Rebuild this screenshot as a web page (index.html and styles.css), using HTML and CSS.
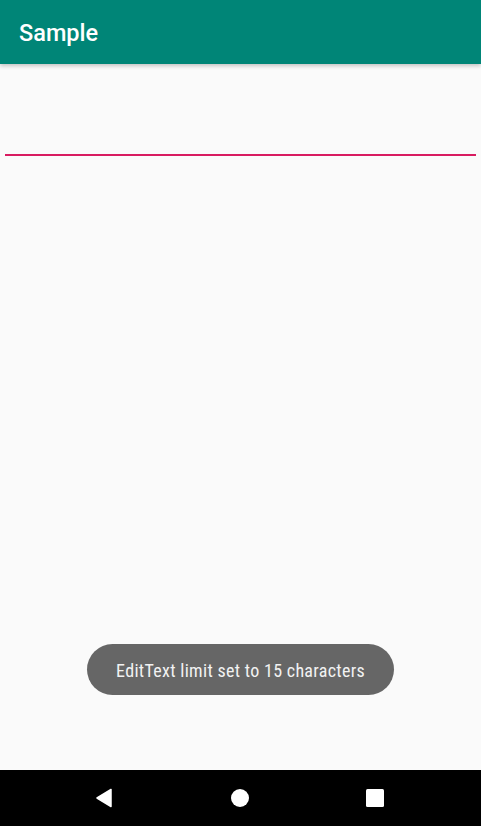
FILE: index.html
```html
<!DOCTYPE html>
<html>
<head>
<meta charset="utf-8">
<link rel="stylesheet" href="styles.css">
</head>
<body>
<div class="screen">
  <header class="toolbar"><span class="title">Sample</span></header>
  <main class="content">
    <div class="edit"><div class="underline"></div></div>
    <div class="spacer"></div>
    <div class="toast-row"><div class="toast">EditText limit set to 15 characters</div></div>
  </main>
  <nav class="navbar">
    <svg class="nav-icon" width="20" height="20" viewBox="0 0 20 20"><path d="M16 1.5 L16 18.5 L2 10 Z" fill="#fff" stroke="#fff" stroke-width="1.5" stroke-linejoin="round"/></svg>
    <svg class="nav-icon" width="20" height="20" viewBox="0 0 20 20"><circle cx="10" cy="10" r="9" fill="#fff"/></svg>
    <svg class="nav-icon" width="20" height="20" viewBox="0 0 20 20"><rect x="1" y="1" width="18" height="18" rx="1.5" fill="#fff"/></svg>
  </nav>
</div>
</body>
</html>
```

FILE: styles.css
```css
html, body {
  margin: 0;
  padding: 0;
}
body {
  font-family: Roboto, "Noto Sans", sans-serif;
  background: #fafafa;
}
.screen {
  width: 481px;
  height: 826px;
  display: flex;
  flex-direction: column;
  background: #fafafa;
  overflow: hidden;
}
.toolbar {
  height: 64px;
  flex: none;
  background: #008577;
  display: flex;
  align-items: center;
  padding-left: 19px;
  box-shadow: 0 2px 4px rgba(0,0,0,0.22);
  position: relative;
  z-index: 1;
}
.title {
  color: #fff;
  font-size: 23.5px;
  font-weight: 500;
  line-height: 1;
  margin-top: 3px;
}
.content {
  flex: 1;
  display: flex;
  flex-direction: column;
}
.edit {
  height: 92px;
  padding: 0 5px;
  display: flex;
  align-items: flex-end;
}
.underline {
  flex: 1;
  height: 2px;
  background: #d81b60;
}
.spacer {
  height: 488px;
}
.toast-row {
  display: flex;
  justify-content: center;
}
.toast {
  width: 307px;
  height: 51px;
  border-radius: 26px;
  background: #666666;
  color: #f2f2f2;
  font-size: 18px;
  font-stretch: condensed;
  letter-spacing: 0.3px;
  padding-top: 1px;
  display: flex;
  align-items: center;
  justify-content: center;
  box-sizing: border-box;
}
.navbar {
  height: 56px;
  flex: none;
  background: #000;
  display: grid;
  grid-template-columns: 20px 20px 20px;
  justify-content: space-between;
  align-items: center;
  padding: 0 96px 0 95px;
}
.nav-icon {
  display: block;
}
```
